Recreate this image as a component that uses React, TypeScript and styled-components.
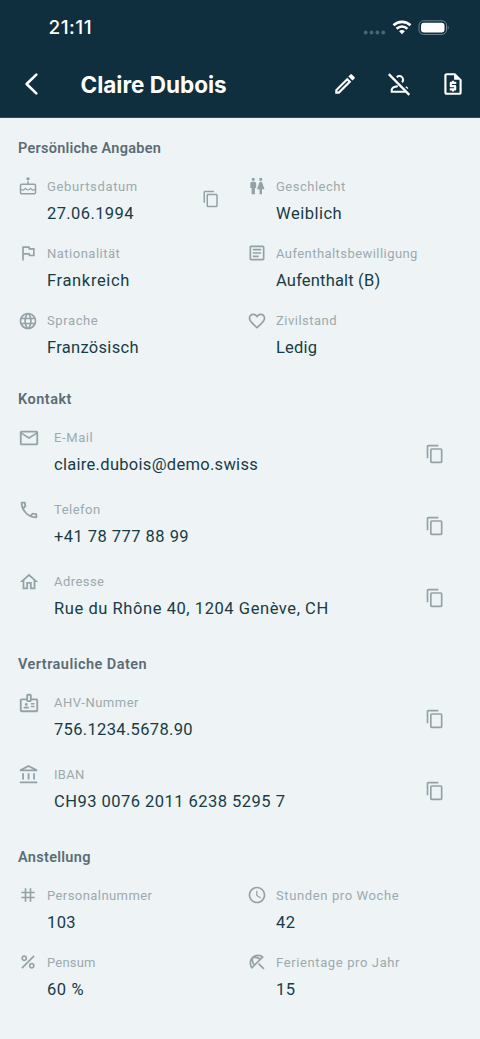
import React from "react";
import styled, { createGlobalStyle } from "styled-components";
import type { IconType } from "react-icons";
import {
  MdOutlineFlag,
  MdLanguage,
  MdOutlineArticle,
  MdFavoriteBorder,
  MdMailOutline,
  MdOutlinePhone,
  MdOutlineHome,
  MdOutlineBadge,
  MdOutlineAccountBalance,
  MdTag,
  MdPercent,
  MdAccessTime,
  MdOutlineBeachAccess,
  MdContentCopy,
  MdOutlineEdit,
  MdOutlineRequestQuote,
} from "react-icons/md";

const GlobalStyle = createGlobalStyle`
  * { box-sizing: border-box; }
  body { margin: 0; background: #eef3f5; }
`;

const Screen = styled.div`
  width: 480px;
  height: 1039px;
  overflow: hidden;
  background: #eef3f5;
  color: #173c46;
  font-family: Roboto, "Liberation Sans", sans-serif;
`;

const Header = styled.header`
  height: 118px;
  background: #0f2f3e;
  border-bottom: 1px solid #34495a;
  color: #fff;
`;

const StatusBar = styled.div`
  height: 55px;
  padding: 0 31px 0 48.5px;
  display: flex;
  align-items: center;
  justify-content: space-between;
`;

const Clock = styled.span`
  font: 500 19px/24px Inter, sans-serif;
  letter-spacing: 0.5px;
`;

const NavBar = styled.div`
  height: 58px;
  padding: 0 14px 0 22px;
  display: flex;
  align-items: center;
`;

const PlainButton = styled.button`
  display: flex;
  padding: 0;
  border: 0;
  background: none;
  color: inherit;
`;

const Title = styled.h1`
  flex: 1;
  margin: 0 0 0 38.5px;
  padding-top: 1px;
  font: 700 22.5px/30px Inter, sans-serif;
  letter-spacing: 0;
  white-space: nowrap;
`;

const Actions = styled.div`
  display: flex;
  gap: 28px;
`;

const Content = styled.main`
  padding: 21px 18px 0;
`;

const Section = styled.section`
  margin-bottom: 15.2px;
`;

const SectionTitle = styled.h2<{ $track: number }>`
  margin: 0 0 14px;
  font-size: 14.5px;
  font-weight: 600;
  line-height: 20px;
  letter-spacing: ${(p) => p.$track}px;
  color: #5b6d74;
`;

const FieldGrid = styled.div`
  display: grid;
  grid-template-columns: 229px 1fr;
`;

const Field = styled.div<{ $wide?: boolean }>`
  display: flex;
  height: ${(p) => (p.$wide ? 71.9 : 67.2)}px;
  gap: ${(p) => (p.$wide ? 14 : 9)}px;
  padding-right: ${(p) => (p.$wide ? 17.5 : 27.5)}px;
`;

const IconCell = styled.div<{ $wide?: boolean }>`
  flex: none;
  width: ${(p) => (p.$wide ? 22 : 20)}px;
  height: ${(p) => (p.$wide ? 28 : 26.5)}px;
  display: flex;
  align-items: center;
  justify-content: center;
  color: #94a2a7;
`;

const FieldText = styled.div`
  flex: 1;
  white-space: nowrap;
`;

const Label = styled.div<{ $track: number }>`
  font-size: 13px;
  line-height: 27px;
  letter-spacing: ${(p) => p.$track}px;
  color: #9baaaf;
`;

const Value = styled.div<{ $track: number }>`
  font-size: 16.5px;
  line-height: 27px;
  letter-spacing: ${(p) => p.$track}px;
`;

const CopyButton = styled(PlainButton)<{ $wide?: boolean }>`
  align-self: flex-start;
  height: ${(p) => (p.$wide ? 60 : 52)}px;
  align-items: center;
  color: #94a2a7;
`;

type IconLike = IconType | ((p: { size?: number }) => React.JSX.Element);

const Cake = ({ size = 20 }: { size?: number }) => (
  <svg width={size} height={size} viewBox="0 0 24 24" fill="none" stroke="currentColor" strokeWidth="1.800">
    <circle cx="12" cy="3.400" r="2" fill="currentColor" stroke="none" />
    <path d="M12 6.200v4" />
    <rect x="3" y="10" width="18" height="11.300" rx="1.500" />
    <path d="M3 15.500c1.700 1.900 3.500 1.900 5 .2l.9-.9 1 .9c1.300 1.300 2.900 1.300 4.200 0l1-.9.9.9c1.500 1.700 3.300 1.700 5-.2" strokeWidth="1.500" />
  </svg>
);

const PersonSlash = () => (
  <svg width="26" height="26" viewBox="0 0 24 24" fill="none" stroke="currentColor" strokeWidth="1.900">
    <path d="M2.600 2.900L21.500 22" strokeWidth="2.100" />
    <path d="M10 5.700a3.350 3.350 0 1 1 4.800 4.700" />
    <path d="M10.900 14c-3.300.4-5.600 1.700-5.600 3.400v1.700h13" />
    <path d="M18.300 14.500l1.900 1.600" strokeWidth="1.200" />
  </svg>
);

const ManWoman = ({ size = 20 }: { size?: number }) => (
  <svg width={size} height={size} viewBox="0 0 24 24" fill="currentColor">
    <path d="M7.500 2a2 2 0 1 1 0 4 2 2 0 0 1 0-4M6 7h3a2 2 0 0 1 2 2v5.500H9.500V22h-4v-7.500H4V9a2 2 0 0 1 2-2M16.500 2a2 2 0 1 1 0 4 2 2 0 0 1 0-4M15 22v-6h-3l2.590-7.590C14.840 7.590 15.600 7 16.500 7s1.660.590 1.910 1.410L21 16h-3v6h-3z" />
  </svg>
);

const StatusIcons = () => (
  <svg width="86" height="18" viewBox="0 0 86 18" fill="none">
    <g fill="#4b6571">
      <circle cx="2.700" cy="13.500" r="1.900" />
      <circle cx="8.500" cy="13.500" r="1.900" />
      <circle cx="14.400" cy="13.500" r="1.900" />
      <circle cx="20.300" cy="13.500" r="1.900" />
    </g>
    <g stroke="#fff" strokeWidth="2.600">
      <path d="M30.500 6.300a12.200 12.200 0 0 1 17 0" />
      <path d="M33.600 9.700a7.800 7.800 0 0 1 10.800 0" />
    </g>
    <path d="M39 15.300l-2.900-3a4.200 4.200 0 0 1 5.800 0z" fill="#fff" />
    <rect x="56" y="1.800" width="27.500" height="13.600" rx="4.500" stroke="#71858e" strokeWidth="1" />
    <rect x="58" y="3.700" width="23.500" height="9.800" rx="3" fill="#fff" />
    <path d="M84.700 6.500v4c1.300-.6 1.300-3.400 0-4z" fill="#71858e" />
  </svg>
);

interface FieldData {
  icon: IconLike;
  label: string;
  value: string;
  labelTrack?: number;
  valueTrack?: number;
  copy?: boolean;
}

const personal: FieldData[] = [
  { icon: Cake, label: "Geburtsdatum", value: "27.06.1994", labelTrack: 0.65, copy: true },
  { icon: ManWoman, label: "Geschlecht", value: "Weiblich", valueTrack: 0.5 },
  { icon: MdOutlineFlag, label: "Nationalität", value: "Frankreich", valueTrack: 0.65 },
  { icon: MdOutlineArticle, label: "Aufenthaltsbewilligung", value: "Aufenthalt (B)", labelTrack: 0.44, valueTrack: 0.18 },
  { icon: MdLanguage, label: "Sprache", value: "Französisch", labelTrack: 0.6, valueTrack: 0.3 },
  { icon: MdFavoriteBorder, label: "Zivilstand", value: "Ledig", valueTrack: 0.2 },
];

const contact: FieldData[] = [
  { icon: MdMailOutline, label: "E-Mail", value: "claire.dubois@demo.swiss", labelTrack: 0.6, valueTrack: 0.3 },
  { icon: MdOutlinePhone, label: "Telefon", value: "+41 78 777 88 99", valueTrack: 0.46 },
  { icon: MdOutlineHome, label: "Adresse", value: "Rue du Rhône 40, 1204 Genève, CH", labelTrack: 0.45, valueTrack: 0.57 },
];

const confidential: FieldData[] = [
  { icon: MdOutlineBadge, label: "AHV-Nummer", value: "756.1234.5678.90", valueTrack: 0.33 },
  { icon: MdOutlineAccountBalance, label: "IBAN", value: "CH93 0076 2011 6238 5295 7", labelTrack: 0.3, valueTrack: 0.47 },
];

const employment: FieldData[] = [
  { icon: MdTag, label: "Personalnummer", value: "103", labelTrack: 0.43 },
  { icon: MdAccessTime, label: "Stunden pro Woche", value: "42", labelTrack: 0.62 },
  { icon: MdPercent, label: "Pensum", value: "60 %", labelTrack: 0.2, valueTrack: 0.6 },
  { icon: MdOutlineBeachAccess, label: "Ferientage pro Jahr", value: "15", labelTrack: 0.62 },
];

const InfoField = ({ data, wide }: { data: FieldData; wide?: boolean }) => {
  const Icon = data.icon;
  return (
    <Field $wide={wide}>
      <IconCell $wide={wide}>
        <Icon size={wide ? 22 : 20} />
      </IconCell>
      <FieldText>
        <Label $track={data.labelTrack ?? 0.5}>{data.label}</Label>
        <Value $track={data.valueTrack ?? 0.4}>{data.value}</Value>
      </FieldText>
      {(wide || data.copy) && (
        <CopyButton $wide={wide} aria-label={`${data.label} kopieren`}>
          <MdContentCopy size={wide ? 20 : 18} />
        </CopyButton>
      )}
    </Field>
  );
};

export default function App() {
  return (
    <Screen>
      <GlobalStyle />
      <Header>
        <StatusBar>
          <Clock>21:11</Clock>
          <StatusIcons />
        </StatusBar>
        <NavBar>
          <PlainButton aria-label="Zurück">
            <svg width="20" height="26" viewBox="0 0 20 26" fill="none" stroke="#fff" strokeWidth="2.600">
              <path d="M14.300 3.600L4.600 13l9.700 9.400" strokeLinecap="round" strokeLinejoin="round" />
            </svg>
          </PlainButton>
          <Title>Claire Dubois</Title>
          <Actions>
            <PlainButton aria-label="Bearbeiten"><MdOutlineEdit size={26} /></PlainButton>
            <PlainButton aria-label="Deaktivieren"><PersonSlash /></PlainButton>
            <PlainButton aria-label="Lohnabrechnung"><MdOutlineRequestQuote size={26} /></PlainButton>
          </Actions>
        </NavBar>
      </Header>
      <Content>
        <Section>
          <SectionTitle $track={0.25}>Persönliche Angaben</SectionTitle>
          <FieldGrid>{personal.map((f) => <InfoField key={f.label} data={f} />)}</FieldGrid>
        </Section>
        <Section>
          <SectionTitle $track={0.5}>Kontakt</SectionTitle>
          {contact.map((f) => <InfoField key={f.label} data={f} wide />)}
        </Section>
        <Section>
          <SectionTitle $track={0.46}>Vertrauliche Daten</SectionTitle>
          {confidential.map((f) => <InfoField key={f.label} data={f} wide />)}
        </Section>
        <Section>
          <SectionTitle $track={0.3}>Anstellung</SectionTitle>
          <FieldGrid>{employment.map((f) => <InfoField key={f.label} data={f} />)}</FieldGrid>
        </Section>
      </Content>
    </Screen>
  );
}
